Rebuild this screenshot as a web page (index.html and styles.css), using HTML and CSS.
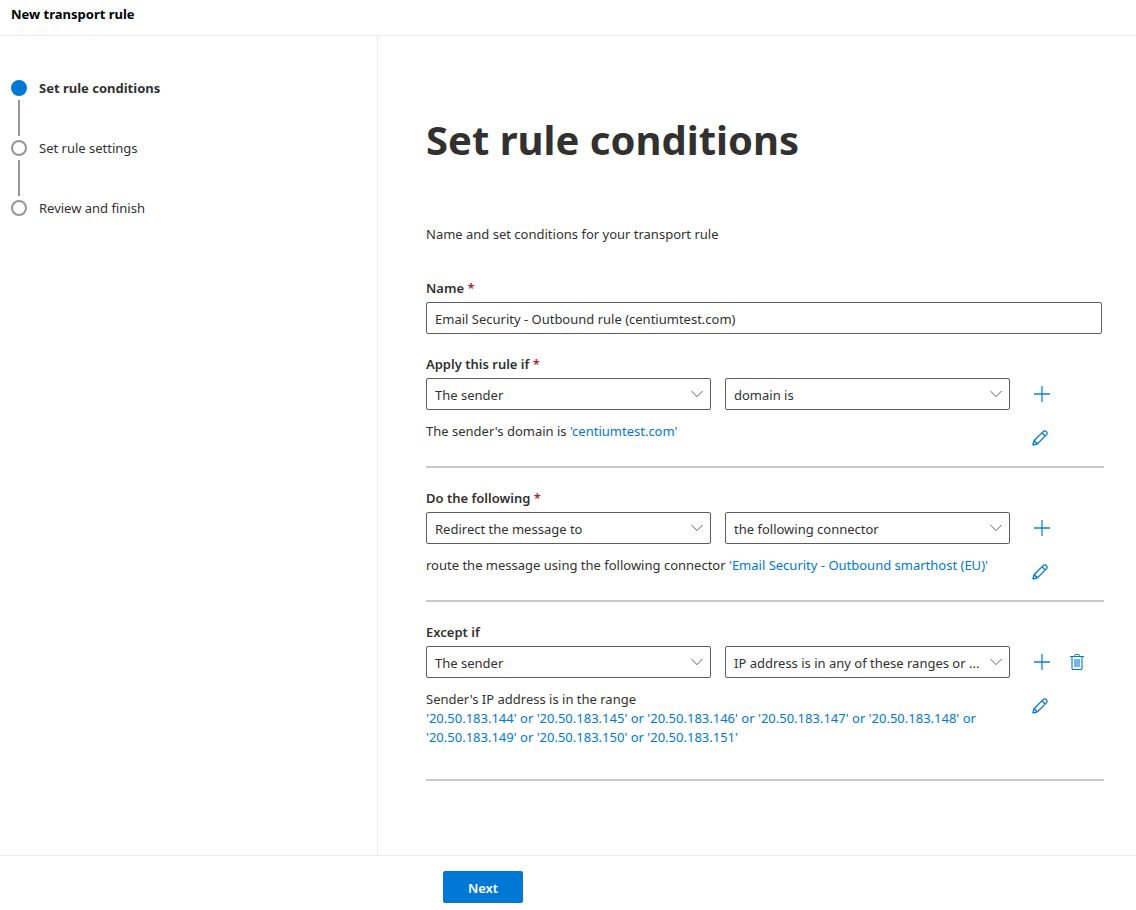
FILE: index.html
```html
<!DOCTYPE html>
<html lang="en">
<head>
<meta charset="utf-8">
<meta name="viewport" content="width=device-width, initial-scale=1">
<title>New transport rule</title>
<link rel="stylesheet" href="styles.css">
</head>
<body>
<svg class="sprite" aria-hidden="true">
  <symbol id="plus" viewBox="0 0 16 16"><path d="M8 0V16" stroke-opacity=".6" stroke-width="2"/><path d="M0 8H16" stroke-opacity=".7" stroke-width="2"/></symbol>
  <symbol id="pencil" viewBox="0 0 16 16"><path stroke-width="1.300" d="M.8 15.2L2.1 10.7L11.4 1.400A2.300 2.300 0 0 1 14.600 4.600L5.3 13.9L.8 15.2M2.1 10.7Q3.3 11 3.5 12.4Q4.9 12.6 5.3 13.9M10 2.8L13.200 6"/></symbol>
  <symbol id="trash" viewBox="0 0 14 16"><path d="M0 2.5H14M4.500 2.500V1.500Q4.500 .5 5.500 .5H8.500Q9.500 .5 9.500 1.500V2.500M2 15.500H12"/><path d="M2 3V15M12 3V15" stroke-width="2" stroke-opacity=".55"/><path class="solid" d="M4 5H10V13H4Z"/></symbol>
  <symbol id="chevron" viewBox="0 0 12 8"><path d="M.4 1L6 6.600L11.600 1"/></symbol>
</svg>
<div class="wizard">
  <header class="topbar"><h2 class="topbar-title">New transport rule</h2></header>
  <div class="body">
    <nav class="steps" aria-label="Progress">
      <ol class="step-list">
        <li class="step step-current" aria-current="step"><span class="dot"></span>Set rule conditions</li>
        <li class="step"><span class="dot"></span>Set rule settings</li>
        <li class="step"><span class="dot"></span>Review and finish</li>
      </ol>
    </nav>
    <main class="content">
      <h1 class="title">Set rule conditions</h1>
      <p class="intro">Name and set conditions for your transport rule</p>
      <form id="rule">
        <div class="field">
          <label class="label" for="name">Name <span class="required">*</span></label>
          <input class="input" id="name" type="text" value="Email Security - Outbound rule (centiumtest.com)">
        </div>

        <section class="section">
          <label class="label" for="apply">Apply this rule if <span class="required">*</span></label>
          <div class="row">
            <div class="dropdown"><select class="select" id="apply"><option>The sender</option></select><svg class="chevron"><use href="#chevron"/></svg></div>
            <div class="dropdown"><select class="select" aria-label="Condition"><option>domain is</option></select><svg class="chevron"><use href="#chevron"/></svg></div>
            <div class="actions"><button class="icon-button" type="button" aria-label="Add condition"><svg class="icon"><use href="#plus"/></svg></button></div>
          </div>
          <div class="row row-detail">
            <p class="summary">The sender's domain is <a class="link" href="#">'centiumtest.com'</a></p>
            <div class="actions"><button class="icon-button" type="button" aria-label="Edit condition"><svg class="icon"><use href="#pencil"/></svg></button></div>
          </div>
        </section>

        <section class="section">
          <label class="label" for="do">Do the following <span class="required">*</span></label>
          <div class="row">
            <div class="dropdown"><select class="select" id="do"><option>Redirect the message to</option></select><svg class="chevron"><use href="#chevron"/></svg></div>
            <div class="dropdown"><select class="select" aria-label="Action target"><option>the following connector</option></select><svg class="chevron"><use href="#chevron"/></svg></div>
            <div class="actions"><button class="icon-button" type="button" aria-label="Add action"><svg class="icon"><use href="#plus"/></svg></button></div>
          </div>
          <div class="row row-detail">
            <p class="summary">route the message using the following connector <a class="link" href="#">'Email Security - Outbound smarthost (EU)'</a></p>
            <div class="actions"><button class="icon-button" type="button" aria-label="Edit action"><svg class="icon"><use href="#pencil"/></svg></button></div>
          </div>
        </section>

        <section class="section section-last">
          <label class="label" for="except">Except if</label>
          <div class="row">
            <div class="dropdown"><select class="select" id="except"><option>The sender</option></select><svg class="chevron"><use href="#chevron"/></svg></div>
            <div class="dropdown"><select class="select" aria-label="Exception"><option>IP address is in any of these ranges or ...</option></select><svg class="chevron"><use href="#chevron"/></svg></div>
            <div class="actions"><button class="icon-button" type="button" aria-label="Add exception"><svg class="icon"><use href="#plus"/></svg></button><button class="icon-button" type="button" aria-label="Delete exception"><svg class="icon icon-trash"><use href="#trash"/></svg></button></div>
          </div>
          <div class="row row-detail">
            <p class="summary">Sender's IP address is in the range<br><a class="link" href="#">'20.50.183.144' or '20.50.183.145' or '20.50.183.146' or '20.50.183.147' or '20.50.183.148' or '20.50.183.149' or '20.50.183.150' or '20.50.183.151'</a></p>
            <div class="actions"><button class="icon-button" type="button" aria-label="Edit exception"><svg class="icon"><use href="#pencil"/></svg></button></div>
          </div>
        </section>
      </form>
    </main>
  </div>
  <footer class="footer"><button class="next" type="submit" form="rule">Next</button></footer>
</div>
</body>
</html>
```
FILE: styles.css
```css
* { box-sizing: border-box; }
body { margin: 0; background: #fff; color: #323130; font: 13px/20px "Noto Sans", sans-serif; }
h1, h2, p, ol { margin: 0; padding: 0; }
button, input, select { font: inherit; color: inherit; margin: 0; }
.sprite { position: absolute; width: 0; height: 0; }
symbol path { fill: none; stroke: currentColor; }
symbol .solid { fill: currentColor; fill-opacity: .55; stroke: none; }

.wizard { display: flex; flex-direction: column; min-height: 100vh; }
.topbar { padding: 4px 11px 11px; border-bottom: 1px solid #eaeaea; }
.topbar-title { font-size: 13px; line-height: 20px; font-weight: 700; color: #000; }
.body { flex: 1; display: grid; grid-template-columns: 378px 1fr; }

.steps { padding: 42px 11px; border-right: 1px solid #eaeaea; }
.step-list { list-style: none; display: flex; flex-direction: column; gap: 40px; }
.step { display: flex; align-items: center; gap: 12px; position: relative; }
.step-current { font-weight: 700; }
.dot { width: 16px; height: 16px; border: 2px solid #979593; border-radius: 50%; }
.step-current .dot { background: #0078d4; border-color: #0078d4; }
.step:not(:last-child)::after { content: ""; position: absolute; left: 7px; top: 22px; width: 2px; height: 36px; background: #979593; }

.content { padding: 72px 32px 74px 48px; min-width: 0; }
.title { font-size: 40px; line-height: 64px; font-weight: 700; }
.intro { margin: 52px 0 34px; }
.label { display: block; font-weight: 600; margin-bottom: 4px; }
.required { color: #a4262c; }
.field { margin-bottom: 20px; padding-right: 2px; }
.input, .select { width: 100%; height: 32px; padding: 2px 8px 0; border: 1px solid #605e5c; border-radius: 2px; background: #fff; }
.input { display: block; }
.select { appearance: none; display: block; padding-right: 26px; text-overflow: ellipsis; }
.section { border-bottom: 2px solid #c8c8c8; padding-bottom: 12px; margin-bottom: 20px; }
.section-last { padding-bottom: 32px; margin-bottom: 0; }
.row { display: grid; grid-template-columns: 1fr 1fr 80px; gap: 14px; }
.row-detail { grid-template-columns: 1fr 80px; margin-top: 12px; }
.dropdown { position: relative; }
.chevron { position: absolute; right: 8px; top: 12px; width: 12px; height: 8px; color: #605e5c; pointer-events: none; }
.actions { display: flex; align-items: flex-start; }
.icon-button { width: 36px; height: 32px; padding: 0; border: 0; background: none; color: #0078d4; display: flex; align-items: center; justify-content: center; }
.icon-button + .icon-button { width: 34px; }
.row-detail .icon-button { width: 32px; }
.icon { width: 16px; height: 16px; }
.icon-trash { width: 14px; }
.summary { line-height: 19px; }
.link { color: #0078d4; text-decoration: none; }

.footer { border-top: 1px solid #eaeaea; padding: 15px 16px 7px 443px; }
.next { display: block; min-width: 80px; height: 32px; padding: 2px 16px 0; border: 0; border-radius: 2px; background: #0078d4; color: #fff; font-weight: 600; }
```
